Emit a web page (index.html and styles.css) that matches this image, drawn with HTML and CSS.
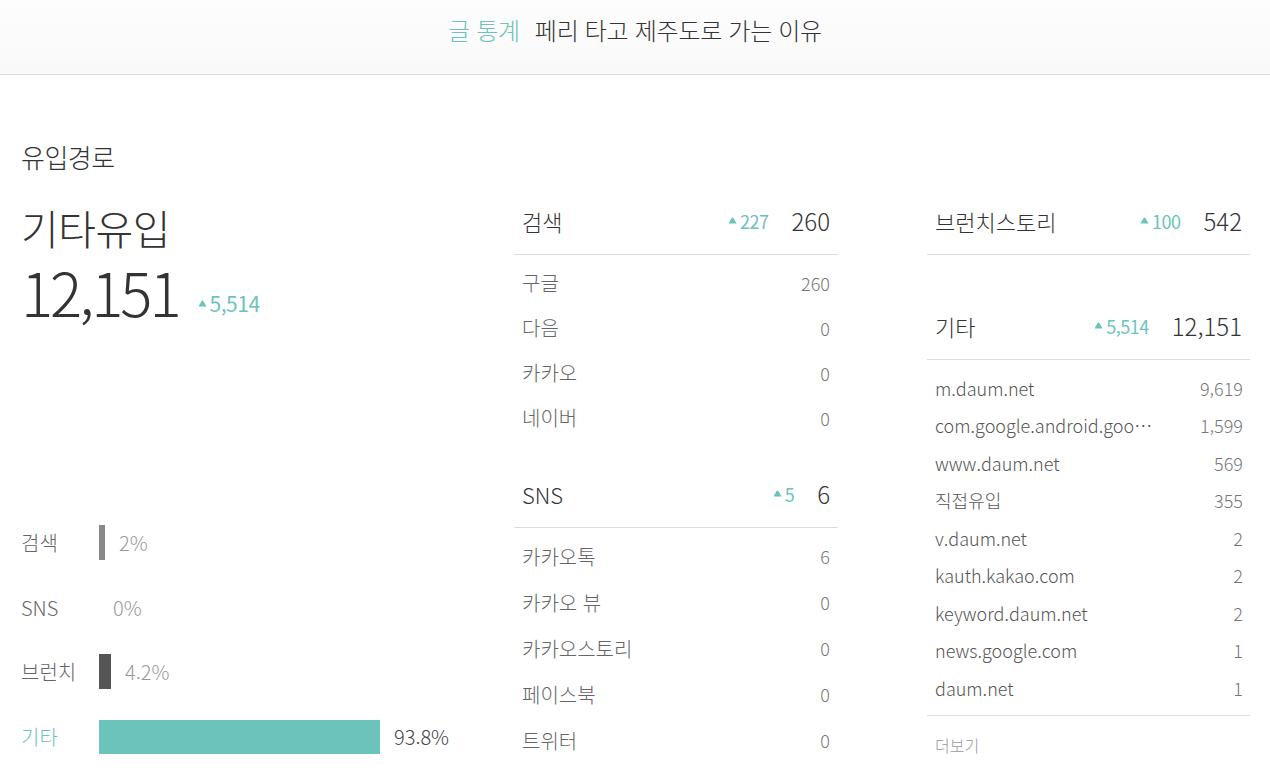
FILE: index.html
```html
<!DOCTYPE html>
<html lang="ko">
<head>
<meta charset="utf-8">
<title>글 통계</title>
<link rel="stylesheet" href="styles.css">
</head>
<body>
<header class="top">
  <span class="top-label">글 통계</span>
  <span class="top-title">페리 타고 제주도로 가는 이유</span>
</header>
<main class="main">
  <h2 class="section-title">유입경로</h2>
  <div class="cols">
    <section class="col-left">
      <div class="big-name">기타유입</div>
      <div class="big-row">
        <span class="big-num">12,151</span>
        <span class="delta delta-big"><svg class="tri" viewBox="0 0 10 8"><path d="M5 0.5 Q5.6 0.5 6 1.2 L9.6 7.5 L0.4 7.5 L4 1.2 Q4.4 0.5 5 0.5Z"/></svg>5,514</span>
      </div>
      <ul class="bars">
        <li class="bar-row"><span class="bar-label">검색</span><span class="bar bar-search" style="width:6px"></span><span class="bar-pct">2%</span></li>
        <li class="bar-row"><span class="bar-label">SNS</span><span class="bar" style="width:0"></span><span class="bar-pct">0%</span></li>
        <li class="bar-row"><span class="bar-label">브런치</span><span class="bar bar-brunch" style="width:12px"></span><span class="bar-pct">4.2%</span></li>
        <li class="bar-row active"><span class="bar-label">기타</span><span class="bar bar-etc" style="width:281px"></span><span class="bar-pct">93.8%</span></li>
      </ul>
    </section>

    <section class="col-mid">
      <div class="group">
        <div class="group-head"><span class="g-name">검색</span><span class="delta"><svg class="tri" viewBox="0 0 10 8"><path d="M5 0.5 Q5.6 0.5 6 1.2 L9.6 7.5 L0.4 7.5 L4 1.2 Q4.4 0.5 5 0.5Z"/></svg>227</span><span class="g-val">260</span></div>
        <ul class="list list-mid">
          <li><span>구글</span><span class="v">260</span></li>
          <li><span>다음</span><span class="v">0</span></li>
          <li><span>카카오</span><span class="v">0</span></li>
          <li><span>네이버</span><span class="v">0</span></li>
        </ul>
      </div>
      <div class="group group-sns">
        <div class="group-head"><span class="g-name">SNS</span><span class="delta"><svg class="tri" viewBox="0 0 10 8"><path d="M5 0.5 Q5.6 0.5 6 1.2 L9.6 7.5 L0.4 7.5 L4 1.2 Q4.4 0.5 5 0.5Z"/></svg>5</span><span class="g-val">6</span></div>
        <ul class="list list-mid list-sns">
          <li><span>카카오톡</span><span class="v">6</span></li>
          <li><span>카카오 뷰</span><span class="v">0</span></li>
          <li><span>카카오스토리</span><span class="v">0</span></li>
          <li><span>페이스북</span><span class="v">0</span></li>
          <li><span>트위터</span><span class="v">0</span></li>
        </ul>
      </div>
    </section>

    <section class="col-right">
      <div class="group">
        <div class="group-head"><span class="g-name">브런치스토리</span><span class="delta"><svg class="tri" viewBox="0 0 10 8"><path d="M5 0.5 Q5.6 0.5 6 1.2 L9.6 7.5 L0.4 7.5 L4 1.2 Q4.4 0.5 5 0.5Z"/></svg>100</span><span class="g-val">542</span></div>
      </div>
      <div class="group group-etc">
        <div class="group-head"><span class="g-name">기타</span><span class="delta"><svg class="tri" viewBox="0 0 10 8"><path d="M5 0.5 Q5.6 0.5 6 1.2 L9.6 7.5 L0.4 7.5 L4 1.2 Q4.4 0.5 5 0.5Z"/></svg>5,514</span><span class="g-val">12,151</span></div>
        <ul class="list list-right">
          <li><span class="n">m.daum.net</span><span class="v">9,619</span></li>
          <li><span class="n">com.google.android.googlequicksearchbox</span><span class="v">1,599</span></li>
          <li><span class="n">www.daum.net</span><span class="v">569</span></li>
          <li><span class="n">직접유입</span><span class="v">355</span></li>
          <li><span class="n">v.daum.net</span><span class="v">2</span></li>
          <li><span class="n">kauth.kakao.com</span><span class="v">2</span></li>
          <li><span class="n">keyword.daum.net</span><span class="v">2</span></li>
          <li><span class="n">news.google.com</span><span class="v">1</span></li>
          <li><span class="n">daum.net</span><span class="v">1</span></li>
        </ul>
        <a class="more">더보기</a>
      </div>
    </section>
  </div>
</main>
</body>
</html>
```

FILE: styles.css
```css
* { box-sizing: border-box; }
html, body { margin: 0; padding: 0; }
body {
  font-family: "Noto Sans CJK KR", "Noto Sans", sans-serif;
  font-weight: 300;
  color: #333;
  background: #fff;
  width: 1270px;
  overflow: hidden;
}
ul { list-style: none; margin: 0; padding: 0; }
h2 { margin: 0; font-weight: 300; }

.top {
  height: 75px;
  border-bottom: 1px solid #dedede;
  background: linear-gradient(#fdfdfd, #f9f9f9);
  display: flex;
  justify-content: center;
  align-items: center;
  padding-bottom: 15px;
  font-size: 24px;
  letter-spacing: -0.3px;
}
.top-label { color: #6cc3bc; margin-right: 15px; }
.top-title { color: #333; }

.main { padding: 65px 0 0 21px; }
.section-title { font-size: 26px; line-height: 34px; color: #333; margin-bottom: 16px; letter-spacing: -0.5px; }

.cols { display: flex; align-items: flex-start; }
.col-left { width: 493px; padding-top: 14px; }
.col-mid { width: 324px; }
.col-right { width: 323px; margin-left: 89px; }

.big-name { font-size: 41px; line-height: 46px; color: #333; letter-spacing: -0.5px; }
.big-row { display: flex; align-items: center; margin-top: 10px; }
.big-num { font-size: 60px; line-height: 62px; color: #333; letter-spacing: -3px; }
.delta { color: #6cc3bc; font-size: 18px; font-weight: 400; display: inline-flex; align-items: center; letter-spacing: -0.5px; }
.delta-big { font-size: 21px; margin-left: 19px; margin-top: 24px; }
.tri { width: 9px; height: 7px; fill: #6cc3bc; margin-right: 3px; }

.bars { margin-top: 203px; display: flex; flex-direction: column; gap: 29.7px; }
.bar-row { display: flex; align-items: center; height: 35px; font-size: 20px; color: #666; }
.bar-label { width: 78px; }
.bar { height: 35px; display: block; }
.bar-search { background: #888; }
.bar-brunch { background: #555; }
.bar-etc { background: #6cc3bc; height: 34px; }
.bar-pct { margin-left: 14px; color: #999; }
.active .bar-label { color: #6cc3bc; }
.active .bar-pct { color: #444; }

.group-head {
  height: 64px;
  border-bottom: 1px solid #ddd;
  display: flex;
  align-items: center;
  padding: 0 8px 4px;
  margin-top: 1px;
}
.g-name { font-size: 22px; color: #333; flex: 1; }
.g-val { font-size: 24px; color: #333; margin-left: 23px; }

.list-mid { padding: 5px 8px 0; }
.list-mid li { height: 45px; display: flex; justify-content: space-between; align-items: center; font-size: 20px; color: #666; }
.list-mid .v { color: #777; font-size: 18px; }
.list-sns li { height: 46px; }
.group-sns { margin-top: 24px; }

.group-etc { margin-top: 41px; }
.list-right { padding: 9px 7px 8px 8px; border-bottom: 1px solid #ddd; }
.list-right li { height: 37.5px; display: flex; justify-content: space-between; align-items: center; font-size: 18px; color: #555; }
.list-right .n { max-width: 218px; overflow: hidden; white-space: nowrap; text-overflow: ellipsis; }
.list-right .v { color: #777; }
.more { display: block; padding: 17px 8px; font-size: 16px; color: #999; }
```
